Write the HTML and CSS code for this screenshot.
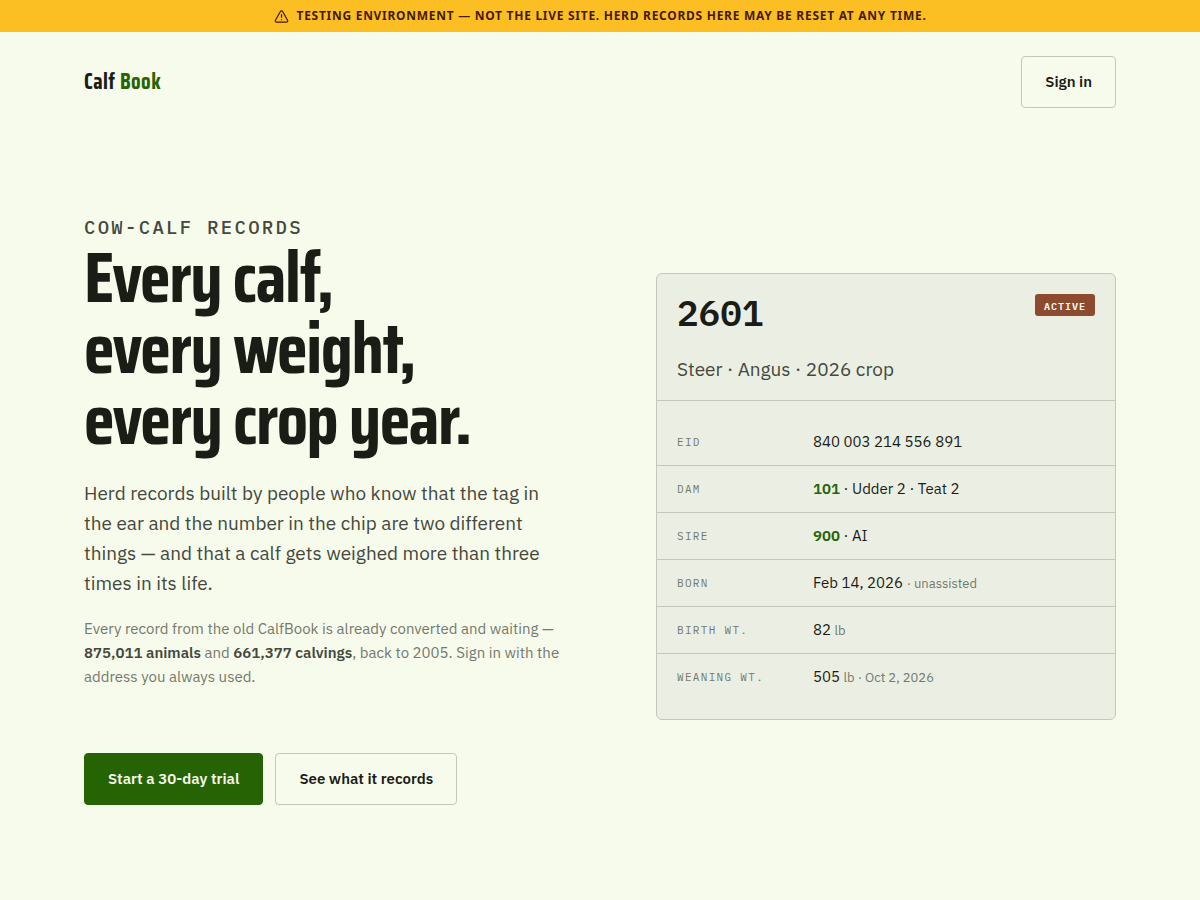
FILE: index.html
```html
<!DOCTYPE html>
<html lang="en">
<head>
    <meta charset="UTF-8">
    <meta name="viewport" content="width=device-width, initial-scale=1.0">
    <title>Calf Book</title>
    <link rel="stylesheet" href="styles.css">
</head>
<body>
    <div class="env-banner" role="status">
        <svg class="env-icon" viewBox="0 0 24 24" aria-hidden="true">
            <path d="m21.73 18-8-14a2 2 0 0 0-3.46 0l-8 14A2 2 0 0 0 4 21h16a2 2 0 0 0 1.73-3Z"/>
            <path d="M12 9v4"/>
            <path d="M12 17h.01"/>
        </svg>
        <span>Testing environment — not the live site. Herd records here may be reset at any time.</span>
    </div>

    <header class="site-header container">
        <a class="logo" href="#">Calf <span>Book</span></a>
        <button type="button" class="btn">Sign in</button>
    </header>

    <main class="hero container">
        <div class="hero-copy">
            <p class="eyebrow">Cow-calf records</p>
            <h1>Every calf,<br>every weight,<br>every crop year.</h1>
            <p class="lead">Herd records built by people who know that the tag in the ear and the number in the chip are two different things — and that a calf gets weighed more than three times in its life.</p>
            <p class="note">Every record from the old CalfBook is already converted and waiting — <strong>875,011 animals</strong> and <strong>661,377 calvings</strong>, back to 2005. Sign in with the address you always used.</p>
            <div class="actions">
                <button type="button" class="btn btn-primary">Start a 30-day trial</button>
                <button type="button" class="btn">See what it records</button>
            </div>
        </div>

        <article class="card">
            <div class="card-head">
                <div class="card-top">
                    <h2 class="tag-number">2601</h2>
                    <span class="badge">Active</span>
                </div>
                <p class="card-sub">Steer · Angus · 2026 crop</p>
            </div>
            <dl class="facts">
                <div class="fact">
                    <dt>EID</dt>
                    <dd>840 003 214 556 891</dd>
                </div>
                <div class="fact">
                    <dt>Dam</dt>
                    <dd><a href="#">101</a> · Udder 2 · Teat 2</dd>
                </div>
                <div class="fact">
                    <dt>Sire</dt>
                    <dd><a href="#">900</a> · AI</dd>
                </div>
                <div class="fact">
                    <dt>Born</dt>
                    <dd>Feb 14, 2026 <small>· unassisted</small></dd>
                </div>
                <div class="fact">
                    <dt>Birth wt.</dt>
                    <dd>82 <small>lb</small></dd>
                </div>
                <div class="fact">
                    <dt>Weaning wt.</dt>
                    <dd>505 <small>lb · Oct 2, 2026</small></dd>
                </div>
            </dl>
        </article>
    </main>
</body>
</html>
```
FILE: styles.css
```css
* {
    box-sizing: border-box;
}
body {
    margin: 0;
    background-color: #f7fbec;
    color: #1a1c16;
    font-family: "IBM Plex Sans", Roboto, sans-serif;
    font-size: 15px;
    line-height: 24px;
}
h1, h2, p, dl, dd {
    margin: 0;
}
.container {
    max-width: 1080px;
    margin: 0 auto;
    padding: 0 24px;
}

/* Banner */
.env-banner {
    display: flex;
    align-items: center;
    justify-content: center;
    gap: 8px;
    padding: 4px 16px;
    background-color: #fbbf24;
    color: #451a03;
    font-family: "Noto Sans", sans-serif;
    font-size: 12px;
    font-weight: 700;
    letter-spacing: 0.06em;
    text-transform: uppercase;
}
.env-icon {
    flex: none;
    width: 15px;
    height: 15px;
    fill: none;
    stroke: currentColor;
    stroke-width: 2;
    stroke-linecap: round;
    stroke-linejoin: round;
}

/* Header */
.site-header {
    display: flex;
    align-items: center;
    justify-content: space-between;
    padding-top: 24px;
    padding-bottom: 24px;
}
.logo {
    color: inherit;
    font-family: "Saira Condensed", "Liberation Sans Narrow", Roboto, sans-serif;
    font-size: 22px;
    font-weight: 700;
    letter-spacing: 0.02em;
    text-decoration: none;
}
.logo span {
    color: #266304;
}
.btn {
    padding: 13px 23px;
    border: 1px solid #c2c8bb;
    border-radius: 4px;
    background-color: transparent;
    color: #1a1c16;
    font-family: inherit;
    font-size: 15px;
    font-weight: 600;
    line-height: 24px;
    cursor: pointer;
}
.btn-primary {
    border-color: #266304;
    background-color: #266304;
    color: #f7fbec;
}

/* Hero */
.hero {
    display: grid;
    grid-template-columns: 1fr 460px;
    align-items: center;
    gap: 64px;
    padding-top: 56px;
    padding-bottom: 96px;
}
.hero-copy {
    padding-top: 24px;
}
.eyebrow {
    color: #44483e;
    font-family: "IBM Plex Mono", "Liberation Mono", monospace;
    font-size: 19px;
    font-weight: 500;
    line-height: 30px;
    letter-spacing: 0.12em;
    text-transform: uppercase;
}
h1 {
    font-family: "Saira Condensed", "Liberation Sans Narrow", Roboto, sans-serif;
    font-size: 72px;
    font-weight: 700;
    line-height: 71px;
    letter-spacing: -0.02em;
}
.lead {
    max-width: 480px;
    margin-top: 23px;
    color: #44483e;
    font-size: 19px;
    line-height: 30px;
}
.note {
    max-width: 490px;
    margin-top: 19px;
    color: #74796d;
}
.note strong {
    color: #44483e;
    font-weight: 600;
}
.actions {
    display: flex;
    flex-wrap: wrap;
    gap: 12px;
    margin-top: 64px;
}

/* Animal card */
.card {
    border: 1px solid #c2c8bb;
    border-radius: 6px;
    background-color: #ebefe3;
}
.card-head {
    padding: 20px 20px 16px;
    border-bottom: 1px solid #c2c8bb;
}
.card-top {
    display: flex;
    align-items: flex-start;
    justify-content: space-between;
}
.tag-number {
    font-family: "IBM Plex Mono", "Liberation Mono", monospace;
    font-size: 36px;
    font-weight: 600;
    line-height: 38px;
}
.badge {
    padding: 3px 9px 0;
    border-radius: 3px;
    background-color: #8c4a2f;
    color: #fff;
    font-family: "IBM Plex Mono", "Liberation Mono", monospace;
    font-size: 10px;
    font-weight: 600;
    line-height: 19px;
    letter-spacing: 0.1em;
    text-transform: uppercase;
}
.card-sub {
    margin-top: 22px;
    color: #44483e;
    font-size: 19px;
    line-height: 30px;
}
.facts {
    padding: 18px 0;
}
.fact {
    display: grid;
    grid-template-columns: 120px 1fr;
    gap: 16px;
    padding: 12px 20px;
    border-bottom: 1px solid #c2c8bb;
    line-height: 22px;
}
.fact:last-child {
    padding-bottom: 13px;
    border-bottom: 0;
}
.fact dt {
    color: #74796d;
    font-family: "IBM Plex Mono", "Liberation Mono", monospace;
    font-size: 11px;
    letter-spacing: 0.12em;
    text-transform: uppercase;
}
.fact a {
    color: #266304;
    font-weight: 600;
    text-decoration: none;
}
.fact small {
    color: #74796d;
    font-size: 13px;
    line-height: 1;
}
```
